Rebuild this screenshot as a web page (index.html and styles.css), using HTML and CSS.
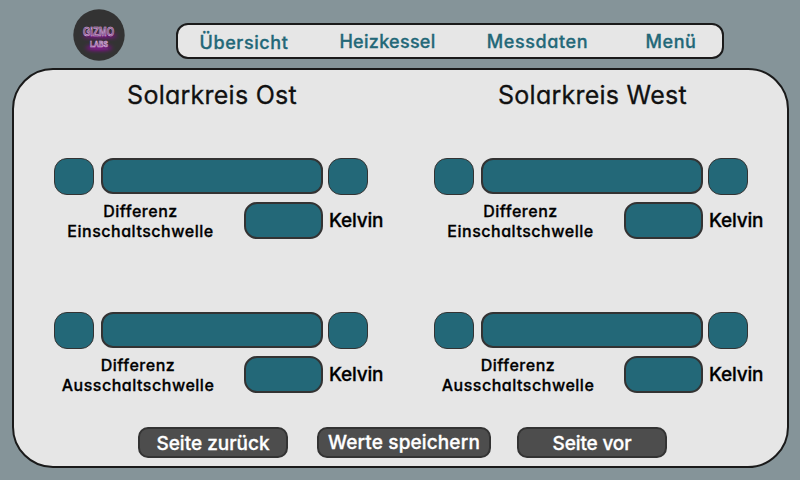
FILE: index.html
```
<!DOCTYPE html>
<html lang="de">
<head>
<meta charset="utf-8">
<title>Solarkreis</title>
<link rel="stylesheet" href="styles.css">
</head>
<body>
<header class="header">
  <svg class="logo" viewBox="0 0 52 52" role="img" aria-label="Gizmo Labs">
    <defs><filter id="glow" x="-50%" y="-150%" width="200%" height="400%"><feGaussianBlur stdDeviation="2"/></filter></defs>
    <circle cx="26" cy="26" r="25.7" fill="#333"/>
    <ellipse class="glow" cx="27" cy="27" rx="17" ry="1.6"/>
    <ellipse class="glow" cx="26" cy="39" rx="13" ry="2"/>
    <text class="logo-big" x="10" y="26.5" textLength="31" lengthAdjust="spacingAndGlyphs">GiZMO</text>
    <text class="logo-small" x="17" y="38" textLength="18" lengthAdjust="spacingAndGlyphs">LABS</text>
  </svg>
  <nav class="nav">
    <a class="n1">Übersicht</a><a class="n2">Heizkessel</a><a class="n3">Messdaten</a><a class="n4">Menü</a>
  </nav>
</header>
<main class="panel">
  <div class="circuits">
    <section class="circuit">
      <h2 class="ost">Solarkreis Ost</h2>
      <div class="setting">
        <div class="slider"><button class="step"></button><div class="bar"></div><button class="step"></button></div>
        <div class="reading"><p class="label on"><span>Differenz</span><br>Einschaltschwelle</p><output class="value"></output><span class="unit">Kelvin</span></div>
      </div>
      <div class="setting">
        <div class="slider"><button class="step"></button><div class="bar"></div><button class="step"></button></div>
        <div class="reading"><p class="label off"><span>Differenz</span><br>Ausschaltschwelle</p><output class="value"></output><span class="unit">Kelvin</span></div>
      </div>
    </section>
    <section class="circuit">
      <h2 class="west">Solarkreis West</h2>
      <div class="setting">
        <div class="slider"><button class="step"></button><div class="bar"></div><button class="step"></button></div>
        <div class="reading"><p class="label on"><span>Differenz</span><br>Einschaltschwelle</p><output class="value"></output><span class="unit">Kelvin</span></div>
      </div>
      <div class="setting">
        <div class="slider"><button class="step"></button><div class="bar"></div><button class="step"></button></div>
        <div class="reading"><p class="label off"><span>Differenz</span><br>Ausschaltschwelle</p><output class="value"></output><span class="unit">Kelvin</span></div>
      </div>
    </section>
  </div>
  <footer class="actions">
    <button class="action back">Seite zurück</button>
    <button class="action save">Werte speichern</button>
    <button class="action next">Seite vor</button>
  </footer>
</main>
</body>
</html>
```

FILE: styles.css
```
* { box-sizing: border-box; }
body {
  margin: 0;
  width: 800px;
  height: 480px;
  overflow: hidden;
  background: #859499;
  color: #000;
  font-family: Inter, "Liberation Sans", sans-serif;
  font-feature-settings: "cv11";
  font-weight: 500;
  white-space: nowrap;
}
button { padding: 0; font: inherit; font-feature-settings: inherit; }

.header { display: flex; height: 68px; padding-left: 73px; }
.logo { width: 52px; height: 52px; margin-top: 9px; overflow: visible; }
.glow { fill: #a010b0; filter: url(#glow); }
.logo-big, .logo-small {
  fill: #6a4a70;
  stroke: #e3b5e8;
  stroke-width: .6;
  font-family: "Liberation Sans", sans-serif;
  font-weight: 700;
}
.logo-big { font-size: 13.5px; }
.logo-small { font-size: 9.5px; }

.nav {
  display: grid;
  grid-template-columns: 132px 155px 145px 111px;
  width: 548px;
  height: 36px;
  margin: 23px 0 0 51px;
  border: 2px solid #1a1a1a;
  border-radius: 12px;
  background: #e6e6e6;
  color: #236878;
  font-size: 18px;
  line-height: 34px;
  text-align: center;
  letter-spacing: .6px;
  -webkit-text-stroke: .3px;
}
.n1 { padding-top: 1px; }
.n2 { letter-spacing: .28px; }
.n4 { padding-left: 11px; }

.panel {
  width: 777px;
  height: 400px;
  margin-left: 12px;
  border: 2px solid #1a1a1a;
  border-radius: 41px;
  background: #e6e6e6;
}
.circuits { display: grid; grid-template-columns: 380px 380px; height: 357px; }
.circuit { padding-left: 40px; }
h2 {
  width: 316px;
  height: 88px;
  margin: 0;
  padding-top: 9px;
  color: #111;
  font-size: 25px;
  font-weight: 400;
  line-height: 33px;
  text-align: center;
  letter-spacing: .25px;
  -webkit-text-stroke: .3px;
}
.west { width: 317px; }
.setting { height: 154px; }
.slider { display: flex; height: 37px; }
.step {
  width: 40px;
  height: 37px;
  border: 1px solid #333;
  border-radius: 13px;
  background: #236878;
}
.bar {
  width: 222px;
  height: 36px;
  margin: 0 5px 0 7px;
  border: 2px solid #333;
  border-radius: 12px;
  background: #236878;
}
.reading { display: flex; height: 44px; padding-top: 7px; }
.label {
  width: 173px;
  margin: -1px 17px 0 0;
  font-size: 16px;
  line-height: 20px;
  text-align: center;
  letter-spacing: .52px;
  -webkit-text-stroke: .3px;
}
.off { padding-right: 5px; }
.value {
  width: 79px;
  height: 37px;
  border: 2px solid #333;
  border-radius: 13px;
  background: #236878;
}
.unit {
  margin-left: 6px;
  font-size: 19px;
  line-height: 38px;
  letter-spacing: -.2px;
  -webkit-text-stroke: .3px;
}

.actions { display: flex; padding-left: 124px; }
.action {
  width: 150px;
  height: 31px;
  border: 2px solid #333;
  border-radius: 10px;
  background: #4d4d4d;
  color: #fff;
  font-size: 19px;
  line-height: 29px;
  letter-spacing: 0;
  -webkit-text-stroke: .3px;
}
.save { width: 174px; margin: 0 26px 0 29px; line-height: 26px; letter-spacing: .13px; }
.next { letter-spacing: -.15px; }
```
